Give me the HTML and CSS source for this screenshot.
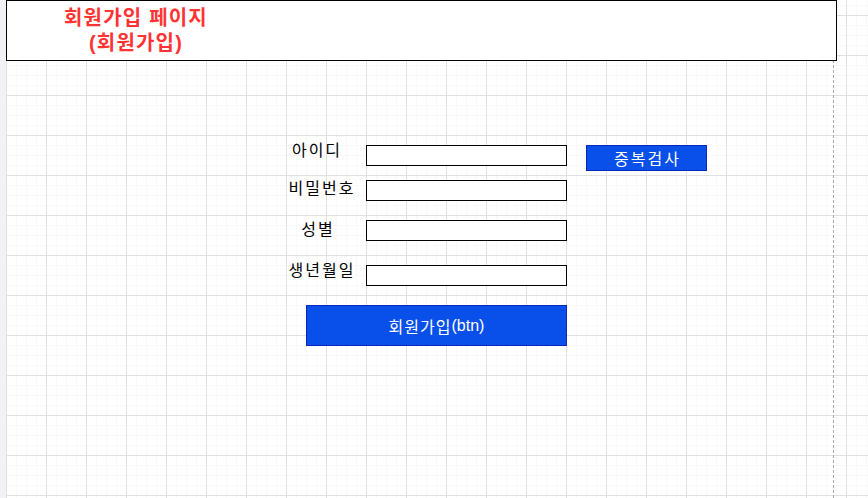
FILE: index.html
```html
<!DOCTYPE html>
<html lang="ko">
<head>
<meta charset="utf-8">
<title>회원가입 페이지</title>
<link rel="stylesheet" href="styles.css">
</head>
<body>
<div class="gutter"></div>
<main class="canvas">
  <div class="page-edge"></div>
  <header class="title-box">
    <h1 class="title">회원가입 페이지<br>(회원가입)</h1>
  </header>
  <form class="form">
    <div class="row row-id">
      <label class="label label-id">아이디</label>
      <div class="field"></div>
      <div class="btn-check">중복검사</div>
    </div>
    <div class="row row-pw">
      <label class="label label-pw">비밀번호</label>
      <div class="field"></div>
    </div>
    <div class="row row-gender">
      <label class="label label-gender">성별</label>
      <div class="field"></div>
    </div>
    <div class="row row-birth">
      <label class="label label-birth">생년월일</label>
      <div class="field"></div>
    </div>
    <div class="btn-join"><span class="ko">회원가입</span>(btn)</div>
  </form>
</main>
</body>
</html>
```
FILE: styles.css
```css
html, body {
  margin: 0;
  padding: 0;
  height: 100%;
}
body {
  display: flex;
  font-family: "Liberation Sans", "Noto Sans CJK KR", sans-serif;
  overflow: hidden;
}
.gutter {
  width: 6px;
  flex: none;
  background: #f0f2f5;
}
.canvas {
  flex: 1;
  position: relative;
  background-color: #fff;
  background-image:
    linear-gradient(to right, #e1e1e1 1px, transparent 1px),
    linear-gradient(to bottom, #e1e1e1 1px, transparent 1px),
    linear-gradient(to right, #f9f9f9 1px, transparent 1px),
    linear-gradient(to bottom, #f9f9f9 1px, transparent 1px);
  background-size: 40px 40px, 40px 40px, 10px 10px, 10px 10px;
  background-position: 0 0, 0 15px, 0 0, 0 5px;
}
.page-edge {
  position: absolute;
  left: 827px;
  top: 0;
  bottom: 0;
  border-left: 1px dashed #a8a8a8;
}
.title-box {
  position: relative;
  box-sizing: border-box;
  width: 831px;
  height: 61px;
  border: 1px solid #000;
  background: #fff;
  display: flex;
  align-items: center;
}
.title {
  margin: 0;
  width: 258px;
  text-align: center;
  font-size: 20px;
  line-height: 25px;
  font-weight: bold;
  letter-spacing: 1.2px;
  color: #ff3333;
}
.form {
  margin: 84px 0 0 0;
  padding-left: 280px;
  display: flex;
  flex-direction: column;
  align-items: flex-start;
}
.row {
  display: flex;
  align-items: flex-start;
}
.row-pw { margin-top: 9px; }
.row-gender { margin-top: 19px; }
.row-birth { margin-top: 24px; }
.label {
  box-sizing: border-box;
  width: 70px;
  margin-right: 10px;
  text-align: center;
  font-size: 16px;
  line-height: 20px;
  letter-spacing: 2px;
  padding-left: 2px;
  color: #000;
  white-space: nowrap;
}
.label-id { margin-top: -4px; padding-right: 10px; }
.label-pw { margin-top: -1px; }
.label-gender { margin-top: 0; padding-right: 8px; }
.label-birth { margin-top: -4px; }
.field {
  box-sizing: border-box;
  width: 201px;
  height: 21px;
  border: 1px solid #000;
  background: #fff;
}
.btn-check,
.btn-join {
  box-sizing: border-box;
  background: #0950ea;
  border: 1px solid #0a26bd;
  color: #fff;
  font-size: 16px;
  display: flex;
  align-items: center;
  justify-content: center;
}
.btn-check {
  width: 121px;
  height: 26px;
  margin-left: 19px;
  letter-spacing: 2px;
  padding-left: 2px;
}
.btn-join {
  width: 261px;
  height: 41px;
  margin: 19px 0 0 20px;
}
.btn-join .ko {
  letter-spacing: 1px;
}
```
